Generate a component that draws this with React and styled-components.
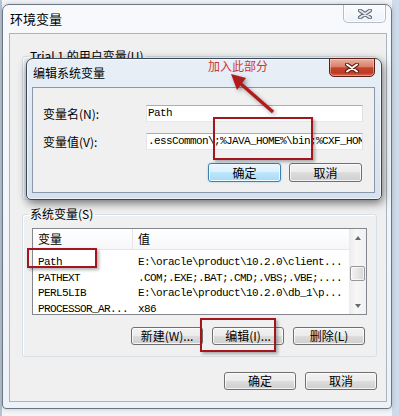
import React from "react";
import styled, { createGlobalStyle, css } from "styled-components";

const GlobalStyle = createGlobalStyle`
  html, body { margin: 0; padding: 0; }
  body {
    background: #e6ecf2;
    font-family: "Noto Sans CJK SC", "Noto Sans", sans-serif;
    font-size: 12px;
    color: #000;
  }
  * { box-sizing: border-box; }
`;

const Screen = styled.div`
  position: relative;
  width: 399px;
  height: 416px;
  overflow: hidden;
  padding: 4px 0 0 2px;
  background: linear-gradient(to right, #b7c3d0 0, #b7c3d0 2px, #f2f4f7 2px, #f2f4f7 392px, #cddbea 392px);
`;

const Window = styled.div`
  width: 390px;
  border: 1px solid #6a7683;
  border-radius: 7px 7px 4px 4px;
  background: linear-gradient(to bottom, #f7f9fc, #edf2f8);
  box-shadow: 0 0 5px rgba(0, 0, 0, 0.2);
`;

const TitleBar = styled.div`
  height: 28px;
  display: flex;
  align-items: center;
  justify-content: space-between;
  padding-left: ${(p) => p.$pad}px;
`;

const Title = styled.span`
  font-size: ${(p) => p.$size || 12}px;
  line-height: 16px;
  color: #000;
`;

const CloseButton = styled.div`
  align-self: flex-start;
  display: flex;
  align-items: center;
  justify-content: center;
  border-radius: 0 0 5px 5px;
  ${(p) =>
    p.$red
      ? css`
          width: 46px;
          height: 19px;
          margin: -1px 6px 0 0;
          border: 1px solid #5e1e15;
          background: linear-gradient(#eab0a2 0%, #d8806b 45%, #c4462d 52%, #bd3a22 80%, #d6654a 100%);
          box-shadow: inset 0 0 0 1px rgba(255, 220, 210, 0.45);
        `
      : css`
          width: 43px;
          height: 18px;
          margin-right: 5px;
          border: 1px solid #b4bdc8;
          border-top: none;
          background: linear-gradient(#fbfcfd, #eef2f7);
          box-shadow: inset 0 0 0 1px rgba(255, 255, 255, 0.8);
        `}
`;

const Client = styled.div`
  margin: 0 4px 6px 6px;
  border: 1px solid #aab5c3;
  background: #f0f0f0;
  padding: 14px 9px 11px 12px;
`;

const Group = styled.fieldset`
  margin: 0;
  height: ${(p) => p.$h}px;
  border: 1px solid #d5dfe5;
  border-radius: 3px;
  padding: 6px 9px 11px 9px;
  box-shadow: inset 1px 1px 0 #fff;
  & + & {
    margin-top: 6px;
  }
`;

const GroupLabel = styled.legend`
  padding: 0 2px;
  margin-left: -4px;
  line-height: 16px;
  font-size: 12px;
`;

const ListView = styled.div`
  display: flex;
  height: 87px;
  border: 1px solid #828790;
  background: #fff;
`;

const ListBody = styled.div`
  flex: 1;
  min-width: 0;
  overflow: hidden;
`;

const ListHeader = styled.div`
  display: grid;
  grid-template-columns: 99px 1fr;
  height: 21px;
  border-bottom: 1px solid #e5e5e5;
  background: linear-gradient(#ffffff, #f6f7f9);
  margin-bottom: 5px;
`;

const HeaderCell = styled.div`
  padding-left: 5px;
  line-height: 20px;
  font-size: 12px;
  & + & {
    border-left: 1px solid #e3e5e8;
  }
`;

const Row = styled.div`
  display: grid;
  grid-template-columns: 99px 1fr;
  height: 15.5px;
  line-height: 15px;
  font-family: "Liberation Mono", "DejaVu Sans Mono", monospace;
  font-size: 11px;
  letter-spacing: -0.6px;
  white-space: nowrap;
`;

const Cell = styled.div`
  padding-left: 5px;
  overflow: hidden;
  & + & {
    padding-left: 6px;
  }
`;

const ScrollBar = styled.div`
  width: 17px;
  display: flex;
  flex-direction: column;
  align-items: center;
  background: linear-gradient(to right, #ebebeb, #f7f7f7 40%, #f1f1f1);
`;

const ScrollArrow = styled.div`
  height: 17px;
  width: 17px;
  display: flex;
  align-items: center;
  justify-content: center;
  margin-top: ${(p) => (p.$down ? "auto" : "0")};
  &::after {
    content: "";
    border-left: 3.5px solid transparent;
    border-right: 3.5px solid transparent;
    ${(p) =>
      p.$down
        ? css`border-top: 4px solid #6a6a6a;`
        : css`border-bottom: 4px solid #6a6a6a;`}
  }
`;

const ScrollThumb = styled.div`
  width: 15px;
  height: 15px;
  margin-top: 20px;
  border: 1px solid #979797;
  border-radius: 2px;
  background: linear-gradient(to right, #f4f4f4, #e6e6e6 50%, #d6d6d6);
  box-shadow: inset 0 0 0 1px rgba(255, 255, 255, 0.7);
`;

const ButtonRow = styled.div`
  display: flex;
  justify-content: flex-end;
  gap: ${(p) => p.$gap || 9}px;
  margin-top: ${(p) => p.$mt}px;
  padding-right: ${(p) => p.$pr || 0}px;
`;

const Button = styled.div`
  width: ${(p) => p.$w || 72}px;
  height: ${(p) => p.$h || 18}px;
  display: flex;
  align-items: center;
  justify-content: center;
  font-size: 12px;
  line-height: 16px;
  border: 1px solid #707070;
  border-radius: 3px;
  background: linear-gradient(#f2f2f2 0%, #ebebeb 50%, #dddddd 50%, #cfcfcf 100%);
  box-shadow: inset 0 0 0 1px rgba(255, 255, 255, 0.75);
  ${(p) =>
    p.$default &&
    css`
      border-color: #3c7fb1;
      background: linear-gradient(#eaf6fd 0%, #d9f0fc 50%, #bee6fd 50%, #a7d9f5 100%);
      box-shadow: inset 0 0 0 1px #f4fbff, 0 0 2px #8cc9ee;
    `}
`;

const Dialog = styled.div`
  position: absolute;
  left: 26px;
  top: 58px;
  width: 356px;
  height: 142px;
  display: flex;
  flex-direction: column;
  border: 1px solid #3b4856;
  border-radius: 7px 7px 5px 5px;
  background: linear-gradient(#e8eff7, #d5e1ee);
  box-shadow: 1px 3px 10px rgba(0, 0, 0, 0.55), inset 0 0 0 1px rgba(255, 255, 255, 0.6);
`;

const DialogPanel = styled.div`
  flex: 1;
  margin: 0 6px 6px 5px;
  border: 1px solid #8b98a9;
  background: #f0f0f0;
  padding: 17px 11px 0 10px;
`;

const FieldGrid = styled.div`
  display: grid;
  grid-template-columns: 103px 1fr;
  row-gap: 11px;
  align-items: center;
`;

const FieldLabel = styled.div`
  font-size: 12px;
  line-height: 16px;
`;

const TextBox = styled.div`
  height: 17px;
  padding-left: 1px;
  border: 1px solid;
  border-color: #abadb3 #dbdfe6 #e3e9ef #e2e3ea;
  background: #fff;
  font-family: "Liberation Mono", "DejaVu Sans Mono", monospace;
  font-size: 11px;
  letter-spacing: -0.6px;
  line-height: 15px;
  white-space: nowrap;
  overflow: hidden;
`;

const Mark = styled.div`
  position: absolute;
  left: ${(p) => p.$x}px;
  top: ${(p) => p.$y}px;
  width: ${(p) => p.$w}px;
  height: ${(p) => p.$h}px;
  border: 2px solid #a3161e;
  box-shadow: 2px 2px 3px rgba(0, 0, 0, 0.3);
  pointer-events: none;
`;

const Note = styled.div`
  position: absolute;
  left: 208px;
  top: 58px;
  font-size: 12px;
  line-height: 16px;
  color: #cc3838;
`;

const ArrowLayer = styled.svg`
  position: absolute;
  left: 0;
  top: 0;
  pointer-events: none;
  filter: drop-shadow(2px 2px 2px rgba(0, 0, 0, 0.35));
`;

function CloseGlyph({ red }) {
  const d = "M-5,-3.5 L5,3.5 M-5,3.5 L5,-3.5";
  return (
    <svg width="14" height="10" viewBox="-7 -5 14 10">
      <path d={d} stroke={red ? "#5a1a12" : "#5f6b79"} strokeWidth="4" strokeLinecap="round" />
      <path d={d} stroke={red ? "#ffffff" : "#e4e8ed"} strokeWidth="2" strokeLinecap="round" />
    </svg>
  );
}

const rows = [
  ["Path", "E:\\oracle\\product\\10.2.0\\client..."],
  ["PATHEXT", ".COM;.EXE;.BAT;.CMD;.VBS;.VBE;...."],
  ["PERL5LIB", "E:\\oracle\\product\\10.2.0\\db_1\\p..."],
  ["PROCESSOR_AR...", "x86"],
];

export default function App() {
  return (
    <Screen>
      <GlobalStyle />
      <Window>
        <TitleBar $pad={7}>
          <Title $size={13}>环境变量</Title>
          <CloseButton>
            <CloseGlyph />
          </CloseButton>
        </TitleBar>
        <Client>
          <Group $h={152}>
            <GroupLabel>Trial 1 的用户变量(U)</GroupLabel>
          </Group>
          <Group $h={151}>
            <GroupLabel>系统变量(S)</GroupLabel>
            <ListView>
              <ListBody>
                <ListHeader>
                  <HeaderCell>变量</HeaderCell>
                  <HeaderCell>值</HeaderCell>
                </ListHeader>
                {rows.map(([name, value]) => (
                  <Row key={name}>
                    <Cell>{name}</Cell>
                    <Cell>{value}</Cell>
                  </Row>
                ))}
              </ListBody>
              <ScrollBar>
                <ScrollArrow />
                <ScrollThumb />
                <ScrollArrow $down />
              </ScrollBar>
            </ListView>
            <ButtonRow $mt={12} $pr={2}>
              <Button>新建(W)...</Button>
              <Button>编辑(I)...</Button>
              <Button>删除(L)</Button>
            </ButtonRow>
          </Group>
          <ButtonRow $mt={15}>
            <Button>确定</Button>
            <Button>取消</Button>
          </ButtonRow>
        </Client>
      </Window>

      <Dialog>
        <TitleBar $pad={6}>
          <Title>编辑系统变量</Title>
          <CloseButton $red>
            <CloseGlyph red />
          </CloseButton>
        </TitleBar>
        <DialogPanel>
          <FieldGrid>
            <FieldLabel>变量名(N):</FieldLabel>
            <TextBox>Path</TextBox>
            <FieldLabel>变量值(V):</FieldLabel>
            <TextBox>.essCommon\;%JAVA_HOME%\bin;%CXF_HOM</TextBox>
          </FieldGrid>
          <ButtonRow $mt={13} $pr={1} $gap={8}>
            <Button $default $w={73} $h={19}>确定</Button>
            <Button $w={73} $h={19}>取消</Button>
          </ButtonRow>
        </DialogPanel>
      </Dialog>

      <Note>加入此部分</Note>
      <ArrowLayer width="399" height="416">
        <line x1="273" y1="112" x2="241" y2="84" stroke="#b01c1c" strokeWidth="3.5" />
        <polygon points="231,74 246,78 237,90" fill="#b01c1c" />
      </ArrowLayer>
      <Mark $x={213} $y={117} $w={100} $h={43} />
      <Mark $x={27} $y={248} $w={70} $h={20} />
      <Mark $x={200} $y={318} $w={76} $h={34} />
    </Screen>
  );
}
